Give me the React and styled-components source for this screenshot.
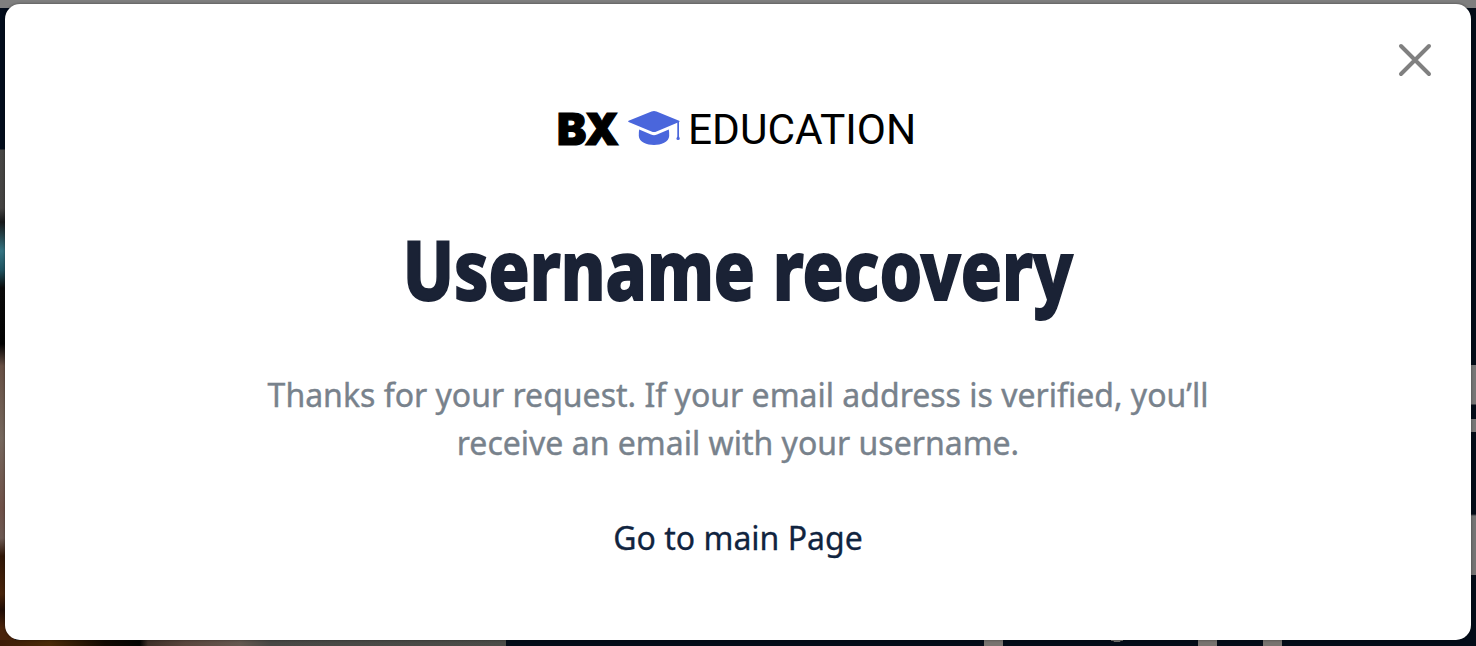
import React from "react";
import styled, { createGlobalStyle } from "styled-components";

const GlobalStyle = createGlobalStyle`
  * { box-sizing: border-box; }
  body { margin: 0; overflow: hidden; }
`;

/* Dimmed page showing round the edges of the dialog */
const Backdrop = styled.div`
  height: 646px;
  width: 1476px;
  padding: 4px 5px 6px;
  background-color: #030c18;
  background-image:
    linear-gradient(#7f7f7f, #7f7f7f),
    linear-gradient(#767676 0 39px, #030c18 40px 54px, #767676 54px 67px, #030c18 67px 149px, #747474 151px),
    linear-gradient(90deg, #77736f 0 19px, transparent 19px 214px, #77736f 214px 233px, transparent 233px 279px, #77736f 279px),
    radial-gradient(ellipse at top, #6f6f6b 60%, transparent 65%),
    linear-gradient(90deg, #3c1c08, #4a2a08 50px, #120902 105px, #030402 140px, #3f3029 148px, #59463d 185px, #655850 240px, #484845 270px, #4b4c48 506px),
    linear-gradient(#030d1c 0 141px, #474644 142px, #444342 200px, #17191a 214px, #347482 243px, #1f5360 262px, #0b0b0b 280px, #030303 336px, #675044 358px, #75675d 430px, #6f5148 500px, #6c5952 530px, #311707 548px, #48240b 586px, #210d06 602px, #4a240b 620px);
  background-repeat: no-repeat;
  background-size: 100% 8px, 5px 210px, 298px 6px, 14px 2px, 506px 6px, 15px 638px;
  background-position: 0 0, 1471px 365px, 984px 640px, 1110px 640px, 0 640px, 0 8px;
`;

const Dialog = styled.main`
  position: relative;
  height: 636px;
  padding-top: 100px;
  display: flex;
  flex-direction: column;
  align-items: center;
  background: #fff;
  border-radius: 15px;
  box-shadow: 0 0 3px rgba(0, 0, 0, 0.45);
  font-family: "Noto Sans", sans-serif;
`;

const CloseButton = styled.button`
  position: absolute;
  top: 36px;
  right: 36px;
  width: 40px;
  height: 40px;
  padding: 0;
  border: 0;
  background: none;
  svg { display: block; }
`;

const Brand = styled.div`
  display: flex;
  align-items: center;
  width: 362px;
  height: 48px;
  color: #000;
`;

const BrandMark = styled.span`
  width: 70px;
  padding-top: 2px;
  font: 900 44px/48px "Inter", sans-serif;
  letter-spacing: -2px;
  white-space: nowrap;
  -webkit-text-stroke: 1.2px #000;
`;

const CapIcon = styled.svg`
  flex: none;
  width: 54px;
  height: 38px;
`;

const BrandName = styled.span`
  padding-top: 4px;
  margin-left: 7px;
  font: 400 42.4px/48px "Roboto", sans-serif;
  white-space: nowrap;
`;

const Title = styled.h1`
  margin: 56px 0 0;
  font-size: 82px;
  line-height: 120px;
  font-weight: 800;
  color: #1a2235;
  white-space: nowrap;
  -webkit-text-stroke: 1.8px #1a2235;
  transform: scaleX(0.828);
`;

const Message = styled.p`
  width: 960px;
  margin: 43px 0 0;
  font-size: 32px;
  line-height: 48px;
  text-align: center;
  color: #78828c;
  -webkit-text-stroke: 0.4px #78828c;
`;

const MainLink = styled.a`
  margin-top: 47px;
  font-size: 32px;
  line-height: 48px;
  color: #10243f;
  text-decoration: none;
  -webkit-text-stroke: 0.3px #10243f;
`;

export default function App() {
  return (
    <Backdrop>
      <GlobalStyle />
      <Dialog>
        <CloseButton aria-label="Close">
          <svg width="40" height="40" viewBox="0 0 40 40" fill="none" stroke="#808080" strokeWidth="4" strokeLinecap="round">
            <path d="M6 6 34 34M34 6 6 34" />
          </svg>
        </CloseButton>
        <Brand>
          <BrandMark>BX</BrandMark>
          <CapIcon viewBox="0 0 54 38" fill="#4a66dc">
            <path d="M1.6 11.8 24.5 2.4Q27 1.4 29.500 2.400L52.100 11.800Q53.300 12.400 52.100 13L29.500 22.500Q27 23.600 24.500 22.500L1.600 13Q.5 12.400 1.600 11.800Z" />
            <path d="M12.200 20.500 24 25.500Q27 27 30 25.500L41.800 20.500Q42.200 22 42.200 27C42 33 34 36 27 36S12 33 11.800 27Q11.800 22 12.200 20.500Z" />
            <path d="M50.300 12.500H52V27.500L52.800 29.500Q52.800 31 51.100 31Q49.400 31 49.400 29.500L50.300 27.500Z" />
          </CapIcon>
          <BrandName>EDUCATION</BrandName>
        </Brand>
        <Title>Username recovery</Title>
        <Message>
          Thanks for your request. If your email address is verified, you’ll
          receive an email with your username.
        </Message>
        <MainLink>Go to main Page</MainLink>
      </Dialog>
    </Backdrop>
  );
}
